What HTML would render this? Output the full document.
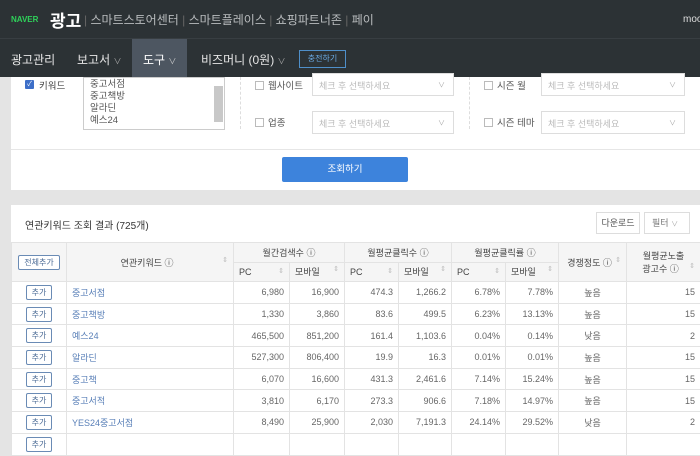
<!DOCTYPE html>
<html><head><meta charset="utf-8"><style>
*{margin:0;padding:0;box-sizing:border-box}
body{width:700px;height:441px;overflow:hidden;background:#e4e4e4;font-family:"Liberation Sans","Noto Sans CJK KR",sans-serif;font-size:9px;color:#333;position:relative}
.a{position:absolute}
.top{left:0;top:0;width:700px;height:38px;background:#2c3235}
.nav{left:0;top:38px;width:700px;height:39px;background:#2c3235;border-top:1px solid #383e42}
.w{color:#b9bcbe;font-size:12px}
.chk{width:9px;height:9px;border:1px solid #bbb;background:#fff}
.sel{height:23px;border:1px solid #ddd;background:#fff;color:#bbb;font-size:9px;padding:5px 6px}
.sel:after{content:"∨";position:absolute;right:8px;top:6px;color:#aaa;font-size:7px}
table{border-collapse:collapse;position:absolute;left:11px;top:242px;width:689px;table-layout:fixed;background:#fff}
td,th{border:1px solid #e3e3e3;font-weight:normal;height:21.7px;font-size:9px;color:#555;padding:0 5px;white-space:nowrap}
th{background:#f5f5f5;text-align:center;height:19.5px;color:#444}
td{text-align:right;color:#666}
td.k{text-align:left;color:#5a80b8}
td.c{text-align:center}
.btn{display:inline-block;border:1px solid #6a8bb5;border-radius:2px;color:#4a6a95;font-size:8px;padding:1px 5px;background:#fff}
.s{color:#bbb;font-size:7px;float:right}
</style></head><body>
<div class="a top"></div>
<div class="a" style="left:11px;top:15px;color:#2fd25a;font-weight:bold;font-size:8px">NAVER</div>
<div class="a" style="left:50px;top:7px;color:#fff;font-size:17px;font-weight:bold">광고</div>
<div class="a w" style="left:84px;top:11px;color:#666">| <span class="w">스마트스토어센터</span> | <span class="w">스마트플레이스</span> | <span class="w">쇼핑파트너존</span> | <span class="w">페이</span></div>
<div class="a" style="left:683px;top:14px;color:#ddd;font-size:10px">moo</div>
<div class="a nav"></div>
<div class="a" style="left:132px;top:39px;width:55px;height:38px;background:#4d5661"></div>
<div class="a" style="left:11px;top:51px;color:#e6e6e6;font-size:12px">광고관리</div>
<div class="a" style="left:77px;top:51px;color:#e6e6e6;font-size:12px">보고서 <span style="font-size:8px;color:#aaa">∨</span></div>
<div class="a" style="left:143px;top:51px;color:#fff;font-size:12px">도구 <span style="font-size:8px;color:#ccc">∨</span></div>
<div class="a" style="left:201px;top:51px;color:#e6e6e6;font-size:12px">비즈머니 (0원) <span style="font-size:8px;color:#aaa">∨</span></div>
<div class="a" style="left:299px;top:50px;width:47px;height:18px;border:1px solid #4f8fc9;color:#6aaae5;font-size:8px;text-align:center;line-height:16px">충전하기</div>

<div class="a" style="left:11px;top:77px;width:689px;height:113px;background:#fff"></div>
<div class="a" style="left:25px;top:80px;width:9px;height:9px;background:#3d6fc8;border-radius:1px;color:#fff;font-size:7px;line-height:9px;text-align:center">✓</div>
<div class="a" style="left:39px;top:78px;color:#444;font-size:9.5px">키워드</div>
<div class="a" style="left:83px;top:77px;width:142px;height:53px;border:1px solid #ccc;background:#fff;padding:1px 6px;color:#555;line-height:12px;font-size:9.5px">중고서점<br>중고책방<br>알라딘<br>예스24</div>
<div class="a" style="left:214px;top:86px;width:9px;height:36px;background:#c8c8c8"></div>
<div class="a" style="left:240px;top:77px;height:52px;border-left:1px dashed #ddd"></div>
<div class="a" style="left:469px;top:77px;height:52px;border-left:1px dashed #ddd"></div>
<div class="a chk" style="left:255px;top:81px"></div><div class="a" style="left:268px;top:78px;font-size:9.5px;color:#555">웹사이트</div>
<div class="a chk" style="left:255px;top:118px"></div><div class="a" style="left:268px;top:115px;font-size:9.5px;color:#555">업종</div>
<div class="a chk" style="left:484px;top:81px"></div><div class="a" style="left:497px;top:78px;font-size:9.5px;color:#555">시즌 월</div>
<div class="a chk" style="left:484px;top:118px"></div><div class="a" style="left:497px;top:115px;font-size:9.5px;color:#555">시즌 테마</div>
<div class="a sel" style="left:312px;top:73px;width:142px">체크 후 선택하세요</div>
<div class="a sel" style="left:312px;top:111px;width:142px">체크 후 선택하세요</div>
<div class="a sel" style="left:541px;top:73px;width:144px">체크 후 선택하세요</div>
<div class="a sel" style="left:541px;top:111px;width:144px">체크 후 선택하세요</div>
<div class="a" style="left:11px;top:149px;width:689px;border-top:1px solid #e6e6e6"></div>
<div class="a" style="left:282px;top:157px;width:126px;height:25px;background:#3d83dc;border-radius:2px;color:#fff;text-align:center;line-height:25px;font-size:9.5px">조회하기</div>

<div class="a" style="left:11px;top:205px;width:689px;height:236px;background:#fff"></div>
<div class="a" style="left:25px;top:217px;font-size:10px;color:#333">연관키워드 조회 결과 (725개)</div>
<div class="a" style="left:596px;top:212px;width:44px;height:22px;border:1px solid #ddd;text-align:center;line-height:20px;font-size:9px;color:#555">다운로드</div>
<div class="a" style="left:644px;top:212px;width:46px;height:22px;border:1px solid #ddd;line-height:20px;font-size:9px;color:#777;padding-left:7px">필터 <span style="font-size:7px;color:#aaa">∨</span></div>

<table>
<colgroup><col style="width:55px"><col style="width:167px"><col style="width:56px"><col style="width:55px"><col style="width:54px"><col style="width:53px"><col style="width:54px"><col style="width:53px"><col style="width:68px"><col style="width:74px"></colgroup>
<tr><th rowspan="2"><span class="btn" style="font-size:8px">전체추가</span></th><th rowspan="2">연관키워드 ⓘ<span class="s">⇕</span></th><th colspan="2">월간검색수 ⓘ</th><th colspan="2">월평균클릭수 ⓘ</th><th colspan="2">월평균클릭률 ⓘ</th><th rowspan="2">경쟁정도 ⓘ <span class="s">⇕</span></th><th rowspan="2">월평균노출<br>광고수 ⓘ<span class="s">⇕</span></th></tr>
<tr><th style="text-align:left">PC<span class="s">⇕</span></th><th style="text-align:left">모바일<span class="s">⇕</span></th><th style="text-align:left">PC<span class="s">⇕</span></th><th style="text-align:left">모바일<span class="s">⇕</span></th><th style="text-align:left">PC<span class="s">⇕</span></th><th style="text-align:left">모바일<span class="s">⇕</span></th></tr>
<tr><td class="c"><span class="btn">추가</span></td><td class="k">중고서점</td><td>6,980</td><td>16,900</td><td>474.3</td><td>1,266.2</td><td>6.78%</td><td>7.78%</td><td class="c">높음</td><td>15</td></tr>
<tr><td class="c"><span class="btn">추가</span></td><td class="k">중고책방</td><td>1,330</td><td>3,860</td><td>83.6</td><td>499.5</td><td>6.23%</td><td>13.13%</td><td class="c">높음</td><td>15</td></tr>
<tr><td class="c"><span class="btn">추가</span></td><td class="k">예스24</td><td>465,500</td><td>851,200</td><td>161.4</td><td>1,103.6</td><td>0.04%</td><td>0.14%</td><td class="c">낮음</td><td>2</td></tr>
<tr><td class="c"><span class="btn">추가</span></td><td class="k">알라딘</td><td>527,300</td><td>806,400</td><td>19.9</td><td>16.3</td><td>0.01%</td><td>0.01%</td><td class="c">높음</td><td>15</td></tr>
<tr><td class="c"><span class="btn">추가</span></td><td class="k">중고책</td><td>6,070</td><td>16,600</td><td>431.3</td><td>2,461.6</td><td>7.14%</td><td>15.24%</td><td class="c">높음</td><td>15</td></tr>
<tr><td class="c"><span class="btn">추가</span></td><td class="k">중고서적</td><td>3,810</td><td>6,170</td><td>273.3</td><td>906.6</td><td>7.18%</td><td>14.97%</td><td class="c">높음</td><td>15</td></tr>
<tr><td class="c"><span class="btn">추가</span></td><td class="k">YES24중고서점</td><td>8,490</td><td>25,900</td><td>2,030</td><td>7,191.3</td><td>24.14%</td><td>29.52%</td><td class="c">낮음</td><td>2</td></tr>
<tr><td class="c"><span class="btn">추가</span></td><td class="k"></td><td></td><td></td><td></td><td></td><td></td><td></td><td></td><td></td></tr>
</table>
</body></html>
